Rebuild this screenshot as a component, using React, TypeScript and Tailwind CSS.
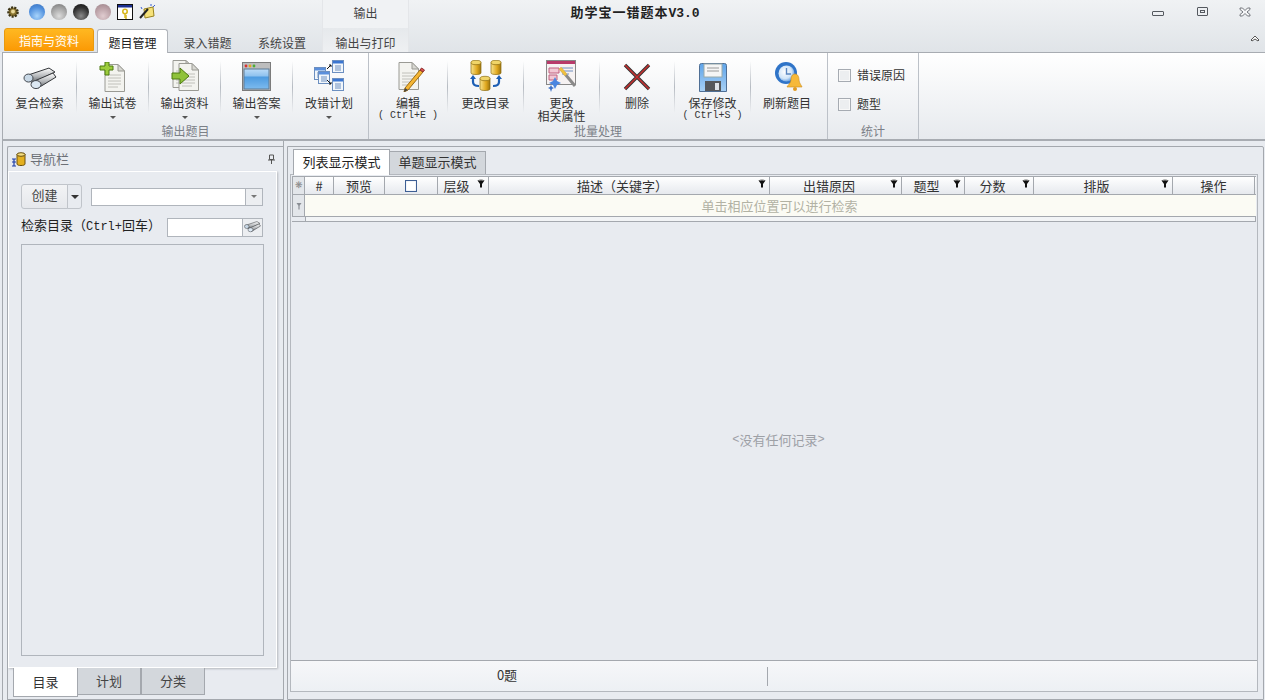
import React from "react";

const Binoculars = ({ s = 34 }: { s?: number }) => (
  <svg width={s} height={s * 0.65} viewBox="0 0 34 22">
    <defs>
      <linearGradient id="bn" x1="0" y1="0" x2="0" y2="1">
        <stop offset="0" stopColor="#ffffff" />
        <stop offset="0.55" stopColor="#b4b7ba" />
        <stop offset="1" stopColor="#5b5e62" />
      </linearGradient>
    </defs>
    <path d="M2 9 L26 1 L32 5 L9 16 Z" fill="url(#bn)" stroke="#33363a" strokeWidth="1" />
    <path d="M9 15 L30 6 L33 10 L15 21 Z" fill="url(#bn)" stroke="#33363a" strokeWidth="1" />
    <ellipse cx="5.5" cy="11" rx="4.5" ry="4" fill="#c8d8e6" stroke="#44484e" />
    <ellipse cx="13" cy="17.5" rx="5" ry="4" fill="#dce8f3" stroke="#44484e" />
  </svg>
);

const Doc = ({ x = 0 }: { x?: number }) => (
  <g transform={`translate(${x} 0)`}>
    <path d="M4 .5H17L23.5 7V27.5H4Z" fill="#f3f3ef" stroke="#9a9a94" />
    <path d="M17 .5V7H23.5Z" fill="#d8d8d2" stroke="#9a9a94" />
    <path d="M7 11H20M7 14H20M7 17H20M7 20H20M7 23H17" stroke="#c0c0ba" strokeWidth="1" />
  </g>
);

const DocPlus = () => (
  <svg width="28" height="30" viewBox="0 0 28 30">
    <g transform="translate(2 2)"><Doc /></g>
    <path d="M6 0H10V4H14V8H10V13H6V8H1V4H6Z" fill="#9ccc3c" stroke="#4d7a10" />
  </svg>
);

const DocArrow = () => (
  <svg width="32" height="32" viewBox="0 0 32 32">
    <g transform="translate(0 0)"><Doc /></g>
    <g transform="translate(6 3)"><Doc /></g>
    <path d="M3 13H11V8L20 16L11 24V19H3Z" fill="#8fc23a" stroke="#4d7a10" />
  </svg>
);

const WinIcon = () => (
  <svg width="30" height="30" viewBox="0 0 30 30">
    <defs>
      <linearGradient id="wn" x1="0" y1="0" x2="0" y2="1">
        <stop offset="0" stopColor="#bcdcf8" />
        <stop offset="0.35" stopColor="#8fc2ee" />
        <stop offset="0.4" stopColor="#4d9be0" />
        <stop offset="1" stopColor="#7dbbef" />
      </linearGradient>
    </defs>
    <rect x=".5" y=".5" width="28" height="28" fill="#bdbdbd" stroke="#7b7b7b" />
    <circle cx="4" cy="4" r="1.4" fill="#d93030" />
    <circle cx="8" cy="4" r="1.4" fill="#e2a820" />
    <circle cx="12" cy="4" r="1.4" fill="#4cae35" />
    <rect x="2" y="7" width="25" height="20" fill="url(#wn)" stroke="#5f7a93" />
  </svg>
);

const MiniWin = ({ x, y, c = "#3b76d2" }: { x: number; y: number; c?: string }) => (
  <g transform={`translate(${x} ${y})`}>
    <rect x=".5" y=".5" width="11" height="12" fill="#f1f6fb" stroke="#6c8fc0" />
    <rect x="1" y="1" width="10" height="2.5" fill={c} />
    <path d="M3 6H9M3 8H9M3 10H9" stroke="#6c8fc0" />
  </g>
);

const PlanIcon = () => (
  <svg width="32" height="32" viewBox="0 0 32 32">
    <MiniWin x={19} y={0} />
    <MiniWin x={19} y={18} />
    <MiniWin x={1} y={7} c="#5b8fdc" />
    <MiniWin x={5} y={11} c="#5b8fdc" />
    <path d="M14 9L18 5M16 5H18V7M14 20L18 24M16 24H18V22" stroke="#111" fill="none" />
  </svg>
);

const EditIcon = () => (
  <svg width="30" height="30" viewBox="0 0 30 30" className="ml-[3px]">
    <Doc />
    <path d="M10 26L9 30L13 28L28 10L25 8Z" fill="#f4b534" stroke="#9a6a10" />
    <path d="M25 8L28 10L29.5 8L26.5 6Z" fill="#d9534f" stroke="#8f3030" />
    <path d="M9 30L10 26L13 28Z" fill="#444" />
  </svg>
);

const Can = ({ x, y }: { x: number; y: number }) => (
  <g transform={`translate(${x} ${y})`}>
    <path d="M0 2.5V13C0 15 10 15 10 13V2.5Z" fill="url(#can)" stroke="#8a6a10" strokeWidth=".7" />
    <ellipse cx="5" cy="2.5" rx="5" ry="2.2" fill="#f0d468" stroke="#8a6a10" strokeWidth=".7" />
  </g>
);

const DbIcon = () => (
  <svg width="32" height="32" viewBox="0 0 32 32">
    <defs>
      <linearGradient id="can" x1="0" y1="0" x2="1" y2="0">
        <stop offset="0" stopColor="#f8e490" />
        <stop offset="0.6" stopColor="#e0a81e" />
        <stop offset="1" stopColor="#9c7410" />
      </linearGradient>
    </defs>
    <Can x={1} y={0} />
    <Can x={21} y={0} />
    <g transform="translate(0 1)"><Can x={10} y={15} /></g>
    <path d="M3 17V22C3 25 6 26 9 26" stroke="#1e5fb4" strokeWidth="2.2" fill="none" />
    <path d="M0 19L3 15L6 19Z" fill="#1e5fb4" />
    <path d="M29 17V22C29 25 26 26 23 26" stroke="#1e5fb4" strokeWidth="2.2" fill="none" />
    <path d="M26 19L29 15L32 19Z" fill="#1e5fb4" />
  </svg>
);

const PropIcon = () => (
  <svg width="32" height="32" viewBox="0 0 32 32">
    <rect x=".5" y=".5" width="29" height="24" fill="#f6f2f2" stroke="#888" />
    <rect x="1" y="1" width="28" height="3" fill="#b83a6a" />
    <path d="M3 8H13V13H3ZM3 15H11V20H3Z" fill="#f2c8d4" stroke="#c06080" />
    <path d="M16 8H27M16 11H27M16 14H23" stroke="#7090c0" />
    <path d="M14 8L29 26" stroke="#8a8a8a" strokeWidth="3" />
    <path d="M14 8L20 15" stroke="#f0c040" strokeWidth="3" />
    <path d="M9 17L11 21L15 23L11 25L9 29L7 25L3 23L7 21Z" fill="#4a86e0" />
    <path d="M5 25L6 27L8 28L6 29L5 32L4 29L2 28L4 27Z" fill="#3a70c8" />
  </svg>
);

const DelIcon = () => (
  <svg width="30" height="30" viewBox="0 0 30 30">
    <path d="M3 3L27 27M27 3L3 27" stroke="#333" strokeWidth="3.4" />
    <path d="M3 3L27 27M27 3L3 27" stroke="#c63030" strokeWidth="1.6" />
  </svg>
);

const SaveIcon = () => (
  <svg width="28" height="29" viewBox="0 0 28 29">
    <defs>
      <linearGradient id="sv" x1="0" y1="0" x2="0" y2="1">
        <stop offset="0" stopColor="#5ea4ea" />
        <stop offset="1" stopColor="#a8d0f4" />
      </linearGradient>
    </defs>
    <path d="M.5 2.5Q.5 .5 2.5 .5H25.5Q27.5 .5 27.5 2.5V28.5H.5Z" fill="url(#sv)" stroke="#4f6f95" />
    <rect x="5" y="1" width="18" height="13" fill="#f5f5f5" stroke="#9aa" />
    <path d="M8 5H20M8 8H20" stroke="#999" />
    <rect x="6" y="18" width="16" height="10" fill="#55585c" />
    <rect x="16" y="20" width="4" height="7" fill="#dfe4ea" />
  </svg>
);

const RefreshIcon = () => (
  <svg width="30" height="30" viewBox="0 0 30 30" className="ml-[3px]">
    <defs>
      <radialGradient id="clk" cx=".4" cy=".4" r=".7">
        <stop offset="0" stopColor="#ffffff" />
        <stop offset=".6" stopColor="#cfe4f8" />
        <stop offset="1" stopColor="#3f86d8" />
      </radialGradient>
    </defs>
    <circle cx="12" cy="11" r="11" fill="#2f74c8" />
    <circle cx="12.5" cy="11.5" r="8" fill="url(#clk)" />
    <path d="M12.5 6V12H17" stroke="#5a86c0" strokeWidth="1.4" fill="none" />
    <path d="M21 12C24 12 25 15 25 18C25 21 28 24 28 25H13C13 24 17 21 17 18C17 15 18 12 21 12Z" fill="#f6b93a" stroke="#c98b1c" strokeWidth=".6" />
    <circle cx="21" cy="27" r="2" fill="#e09a22" />
  </svg>
);

const Funnel = () => (
  <svg width="8" height="9" viewBox="0 0 8 9" className="shrink-0">
    <path d="M.5 1.5Q4 -.5 7.5 1.5L5 5V8.5H3V5Z" fill="#111" />
    <path d="M1.5 1.3Q4 .5 6.5 1.3" stroke="#fff" strokeWidth=".7" fill="none" />
  </svg>
);

const Sep = () => <div className="w-[1px] h-[52px] shrink-0 bg-gradient-to-b from-transparent via-[#b6bbc2] to-transparent" />;

const Btn = ({ w, icon, label, label2, sub, caret }: { w: string; icon: React.ReactNode; label: string; label2?: string; sub?: string; caret?: boolean }) => (
  <div className={`${w} shrink-0 flex flex-col items-center`}>
    <div className="h-[33px] pb-[2px] flex items-end justify-center">{icon}</div>
    <div className="mt-[2px] text-[12px] leading-[13px] text-[#333] whitespace-nowrap text-center">{label}</div>
    {label2 && <div className="text-[12px] leading-[13px] text-[#333] whitespace-nowrap text-center">{label2}</div>}
    {sub && <div className="mt-[2px] text-[10px] leading-[10px] text-[#333] whitespace-pre font-['Liberation_Mono',monospace]">{sub}</div>}
    {caret && <div className="mt-[7px] w-0 h-0 border-x-[3px] border-x-transparent border-t-[3px] border-t-[#555]" />}
  </div>
);

const Group = ({ title, w, children }: { title: string; w: string; children: React.ReactNode }) => (
  <div className={`${w} shrink-0 h-full flex flex-col border-r border-[#bcc1c8]`}>
    <div className="flex h-[71px] pt-[8px]">{children}</div>
    <div className="h-[15px] text-center text-[12px] leading-[14px] text-[#7b8087]">{title}</div>
  </div>
);

const Orb = ({ c }: { c: string }) => <div className={`w-[16px] h-[16px] rounded-full ${c}`} />;

const Check = ({ label }: { label: string }) => (
  <div className="flex items-center gap-[6px] h-[14px]">
    <div className="w-[13px] h-[13px] border border-[#a6abb2] bg-[#eceef0] shadow-[inset_0_0_0_1px_#f8f8f8]" />
    <span className="text-[12px] leading-[14px] text-[#333]">{label}</span>
  </div>
);

const cols: { t: string; w: string; f?: boolean }[] = [
  { t: "#", w: "w-[29px]" },
  { t: "预览", w: "w-[51px]" },
  { t: "", w: "w-[53px]" },
  { t: "层级", w: "w-[51px]", f: true },
  { t: "描述（关键字）", w: "w-[281px]", f: true },
  { t: "出错原因", w: "w-[132px]", f: true },
  { t: "题型", w: "w-[63px]", f: true },
  { t: "分数", w: "w-[69px]", f: true },
  { t: "排版", w: "w-[139px]", f: true },
  { t: "操作", w: "w-[82px]" },
];

export default function App() {
  return (
    <div className="w-[1265px] h-[700px] overflow-hidden flex flex-col bg-[#e8ebf0] text-[#333] font-['Noto_Sans_CJK_SC','Liberation_Sans',sans-serif]">
      {/* Title + tabs */}
      <div className="h-[52px] shrink-0 flex flex-col bg-gradient-to-b from-[#f0f2f4] to-[#e0e4e8]">
        <div className="h-[28px] flex shrink-0">
          <div className="w-[322px] shrink-0 flex items-center pl-[6px] pb-[4px]">
            <svg width="14" height="14" viewBox="0 0 14 14" className="mr-[9px]">
              <circle cx="7" cy="7" r="4.6" fill="#8a7430" stroke="#3d3518" strokeWidth="2.4" strokeDasharray="2 1.2" />
              <circle cx="7" cy="6.5" r="2" fill="#e8d89a" />
            </svg>
            <div className="flex gap-[6px]">
              <Orb c="bg-[radial-gradient(circle_at_50%_75%,#a8d4fb,#4f8fdd_60%,#3a6fb8)]" />
              <Orb c="bg-[radial-gradient(circle_at_50%_75%,#dcdcdc,#a0a0a0_60%,#707070)]" />
              <Orb c="bg-[radial-gradient(circle_at_50%_75%,#8a8a8a,#303030_60%,#101010)]" />
              <Orb c="bg-[radial-gradient(circle_at_50%_75%,#e0ccd0,#b89ea4_60%,#9a8288)]" />
            </div>
            <svg width="16" height="16" viewBox="0 0 16 16" className="ml-[6px]">
              <rect x=".5" y=".5" width="15" height="15" fill="#fff" stroke="#111" />
              <rect x="1" y="1" width="14" height="2.5" fill="#1c2f8f" />
              <circle cx="8" cy="7.5" r="2.2" fill="none" stroke="#d8b820" strokeWidth="1.6" />
              <path d="M8 9.5V14M8 12H10M8 14H10" stroke="#d8b820" strokeWidth="1.4" />
            </svg>
            <svg width="17" height="17" viewBox="0 0 17 17" className="ml-[6px]">
              <path d="M5 5L14 3L15 12L6 14Z" fill="#f6e27a" stroke="#9a8420" />
              <path d="M1 14L9 5" stroke="#222" strokeWidth="2" />
              <path d="M2 3L3 5M12 0L12 2M16 1L14 3" stroke="#3a5fd0" />
            </svg>
          </div>
          <div className="w-[87px] shrink-0 text-center text-[12px] leading-[17px] pt-[4px] text-[#444] bg-[#f0f2f4] border-x border-[#e4e6e9]">输出</div>
          <div className="w-[452px] shrink-0 text-center text-[13px] leading-[17px] pt-[3px] font-bold text-[#222] tracking-[1px] whitespace-nowrap">助学宝一错题本<span className="font-['Liberation_Mono',monospace] tracking-normal">V3.0</span></div>
          <div className="flex-1" />
          <div className="flex items-start pt-[7px] pr-[14px]">
            <div className="w-[12px] h-[5px] mt-[4px] border border-[#55595f] rounded-[1px]" />
            <div className="ml-[33px] w-[11px] h-[9px] border border-[#55595f] rounded-[1px] flex items-center justify-center"><div className="w-[5px] h-[3px] border border-[#55595f]" /></div>
            <svg width="12" height="10" viewBox="0 0 12 10" className="ml-[31px]"><path d="M1 1H3.5L6 3.5L8.5 1H11V2.5L8 5L11 7.5V9H8.5L6 6.5L3.5 9H1V7.5L4 5L1 2.5Z" fill="#f5f6f7" stroke="#55595f" strokeWidth=".8" /></svg>
          </div>
        </div>
        <div className="h-[24px] flex shrink-0 items-end relative z-10">
          <div className="ml-[4px] w-[90px] h-[23px] mb-[1px] rounded-t-[3px] border border-[#e89a10] bg-gradient-to-b from-[#ffb820] to-[#fb9a04] text-white text-center text-[12px] leading-[24px]">指南与资料</div>
          <div className="ml-[3px] w-[71px] h-[24px] -mb-[1px] rounded-t-[3px] border border-b-0 border-[#b0b4ba] bg-white text-center text-[12px] leading-[26px] text-[#222]">题目管理</div>
          <div className="w-[79px] h-[24px] text-center text-[12px] leading-[29px] text-[#444]">录入错题</div>
          <div className="w-[70px] h-[24px] text-center text-[12px] leading-[29px] text-[#444]">系统设置</div>
          <div className="ml-[5px] w-[87px] h-[24px] text-center text-[12px] leading-[29px] text-[#444] bg-gradient-to-b from-[#e6e9ec] to-[#eef0f2] border-x border-[#e4e6e9]">输出与打印</div>
          <div className="flex-1" />
          <svg width="10" height="7" viewBox="0 0 10 7" className="mr-[5px] mb-[10px]"><path d="M1 5L5 1L9 5L8 6L5 4L2 6Z" fill="#fff" stroke="#444" strokeWidth=".9" /></svg>
        </div>
      </div>

      {/* Ribbon */}
      <div className="h-[89px] shrink-0 ml-[2px] flex border-t border-b-2 border-[#a8acb2] border-l bg-gradient-to-b from-white to-[#e7eaee]">
        <Group title="输出题目" w="w-[366px]">
          <Btn w="w-[73px]" icon={<div className="mb-[3px]"><Binoculars /></div>} label="复合检索" />
          <Sep />
          <Btn w="w-[71px]" icon={<DocPlus />} label="输出试卷" caret />
          <Sep />
          <Btn w="w-[71px]" icon={<DocArrow />} label="输出资料" caret />
          <Sep />
          <Btn w="w-[71px]" icon={<WinIcon />} label="输出答案" caret />
          <Sep />
          <Btn w="w-[72px]" icon={<PlanIcon />} label="改错计划" caret />
        </Group>
        <Group title="批量处理" w="w-[459px]">
          <Btn w="w-[78px]" icon={<EditIcon />} label="编辑" sub="( Ctrl+E )" />
          <Sep />
          <Btn w="w-[75px]" icon={<DbIcon />} label="更改目录" />
          <Sep />
          <Btn w="w-[75px]" icon={<PropIcon />} label="更改" label2="相关属性" />
          <Sep />
          <Btn w="w-[74px]" icon={<DelIcon />} label="删除" />
          <Sep />
          <Btn w="w-[75px]" icon={<SaveIcon />} label="保存修改" sub="( Ctrl+S )" />
          <Sep />
          <Btn w="w-[72px]" icon={<RefreshIcon />} label="刷新题目" />
        </Group>
        <div className="w-[91px] shrink-0 h-full flex flex-col border-r border-[#bcc1c8]">
          <div className="h-[71px] pt-[15px] pl-[10px] flex flex-col gap-[15px]">
            <Check label="错误原因" />
            <Check label="题型" />
          </div>
          <div className="h-[15px] text-center text-[12px] leading-[14px] text-[#7b8087]">统计</div>
        </div>
      </div>

      {/* Body */}
      <div className="flex-1 min-h-0 flex pl-[2px] pr-[1px]">
        {/* Left */}
        <div className="w-[282px] shrink-0 flex flex-col border-l border-r border-[#a4a8ae] pl-[4px] pt-[5px]">
          <div className="flex-1 min-h-0 flex flex-col border-t border-l border-b border-[#a4a8ae] rounded-tl-[2px]">
            <div className="h-[24px] shrink-0 flex items-center pl-[3px] pr-[7px]">
              <svg width="16" height="15" viewBox="0 0 16 15" className="mr-[3px]">
                <path d="M6 2V12C6 14 14 14 14 12V2Z" fill="#e4b020" stroke="#6a5010" />
                <ellipse cx="10" cy="2.5" rx="4" ry="1.8" fill="#f5de80" stroke="#6a5010" />
                <path d="M1 7H5M1 10H5M3 7V14M1 14H5" stroke="#1e3fa8" strokeWidth="1.2" fill="none" />
              </svg>
              <span className="text-[13px] leading-[18px] text-[#6c7077]">导航栏</span>
              <div className="flex-1" />
              <svg width="9" height="11" viewBox="0 0 9 11"><path d="M2.5 1H6.5V5.5H2.5ZM1 6H8M4.5 6V10" stroke="#555" fill="none" /></svg>
            </div>
            <div className="w-[269px] h-[497px] shrink-0 border border-white shadow-[1px_1px_2px_#b5b8bd] px-[12px] pt-[12px] pb-[11px] flex flex-col">
              <div className="flex items-center h-[25px] shrink-0">
                <div className="w-[47px] h-[25px] border border-[#c0c4ca] rounded-l-[3px] bg-gradient-to-b from-[#f2f3f5] to-[#e6e8ec] text-center text-[13px] leading-[20px] text-[#444]">创建</div>
                <div className="w-[15px] h-[25px] -ml-[1px] border border-[#c0c4ca] rounded-r-[3px] flex items-center justify-center"><div className="border-x-[4px] border-x-transparent border-t-[4px] border-t-[#333]" /></div>
                <div className="ml-[9px] w-[172px] h-[18px] border border-[#b0b5bc] bg-white flex justify-end">
                  <div className="w-[17px] h-full border-l border-[#b0b5bc] bg-[#eceef1] flex items-center justify-center"><div className="border-x-[3px] border-x-transparent border-t-[3px] border-t-[#777]" /></div>
                </div>
              </div>
              <div className="mt-[8px] flex items-center h-[20px] shrink-0">
                <span className="w-[146px] pb-[2px] text-[13px] leading-[18px] text-[#222] whitespace-nowrap">检索目录（<span className="font-['Liberation_Mono',monospace] text-[12px]">Ctrl+</span>回车）</span>
                <div className="w-[96px] h-[19px] border border-[#b0b5bc] bg-white flex justify-end">
                  <div className="w-[20px] h-full border-l border-[#b0b5bc] bg-[#eceef1] flex items-center justify-center"><Binoculars s={17} /></div>
                </div>
              </div>
              <div className="mt-[7px] flex-1 border border-[#b0b5bc]" />
            </div>
            <div className="flex items-start pl-[5px] h-[31px] shrink-0">
              <div className="w-[65px] h-[29px] bg-white border-l border-r border-b border-[#a4a8ae] text-center text-[13px] leading-[27px] text-[#333]">目录</div>
              <div className="w-[64px] h-[27px] bg-[#d3d7dc] border-r-2 border-b border-[#a4a8ae] text-center text-[13px] leading-[26px] text-[#444]">计划</div>
              <div className="w-[63px] h-[27px] bg-[#d3d7dc] border-r border-b border-[#a4a8ae] text-center text-[13px] leading-[26px] text-[#444]">分类</div>
            </div>
          </div>
        </div>
        {/* Right */}
        <div className="flex-1 min-w-0 ml-[3px] mt-[5px] border border-[#a4a8ae] rounded-tr-[2px] flex flex-col pl-[2px] pr-[5px] pt-[1px] pb-[7px]">
          <div className="flex items-end h-[26px] shrink-0 pl-[3px]">
            <div className="w-[97px] h-[26px] -mb-[1px] relative z-10 bg-white border-l border-r border-t border-[#a4a8ae] text-center text-[13px] leading-[24px] text-[#222]">列表显示模式</div>
            <div className="w-[96px] h-[23px] bg-[#d3d7dc] border-r border-t border-[#a4a8ae] text-center text-[13px] leading-[20px] text-[#333]">单题显示模式</div>
          </div>
          <div className="flex-1 min-h-0 flex flex-col border border-[#b4b8be]">
            <div className="shrink-0 mx-[1px] mt-[1px] h-[46px] border-b border-t border-[#a4a8ae] flex flex-col">
              <div className="flex h-[18px] shrink-0 border-b border-[#a4a8ae] bg-gradient-to-b from-white to-[#e6e9ee]">
                <div className="w-[13px] shrink-0 border-r border-l border-[#a4a8ae] bg-[#e3e6ea] text-[9px] leading-[16px] text-center text-[#888]">❋</div>
                {cols.map((c, i) => (
                  <div key={i} className={`${c.w} shrink-0 relative border-r border-[#a4a8ae] flex items-center justify-center text-[13px] leading-[16px] text-[#333]`}>
                    {c.t === "" ? (
                      <div className="w-[12px] h-[12px] bg-white border border-[#3e5f94] shadow-[inset_0_0_1px_#8fa0c0]" />
                    ) : (
                      <span className={c.f ? "pr-[13px]" : ""}>{c.t}</span>
                    )}
                    {c.f && <div className="absolute right-[3px] top-[2px]"><Funnel /></div>}
                  </div>
                ))}
              </div>
              <div className="flex h-[22px] shrink-0 border-b border-[#a4a8ae]">
                <div className="w-[13px] shrink-0 border-r border-l border-[#a4a8ae] bg-[#e3e6ea] flex items-center justify-center">
                  <svg width="6" height="8" viewBox="0 0 6 8"><path d="M.5 1H5.5L3.6 3.8V7.5H2.4V3.8Z" fill="#8a8e94" /></svg>
                </div>
                <div className="flex-1 bg-[#fbfbf4] text-center text-[13px] leading-[22px] text-[#b2b2a4] pr-[2px]">单击相应位置可以进行检索</div>
              </div>
              <div className="flex-1 ml-[13px] bg-[#f2f4f6] border-r border-[#a4a8ae] border-l" />
            </div>
            <div className="flex-1 min-h-0 flex items-center justify-center text-[13px] text-[#9da0a6] pl-[9px] pb-[3px]"><span className="font-['Liberation_Mono',monospace] text-[12px]">&lt;</span>没有任何记录<span className="font-['Liberation_Mono',monospace] text-[12px]">&gt;</span></div>
            <div className="h-[31px] shrink-0 border-t border-[#a4a8ae] bg-gradient-to-b from-[#f6f7f9] to-[#edf0f4] flex items-center">
              <div className="w-[477px] shrink-0 border-r border-[#a4a8ae] h-[19px] text-[13px] leading-[16px] text-center pr-[44px] text-[#333]">0题</div>
            </div>
          </div>
        </div>
      </div>
    </div>
  );
}
